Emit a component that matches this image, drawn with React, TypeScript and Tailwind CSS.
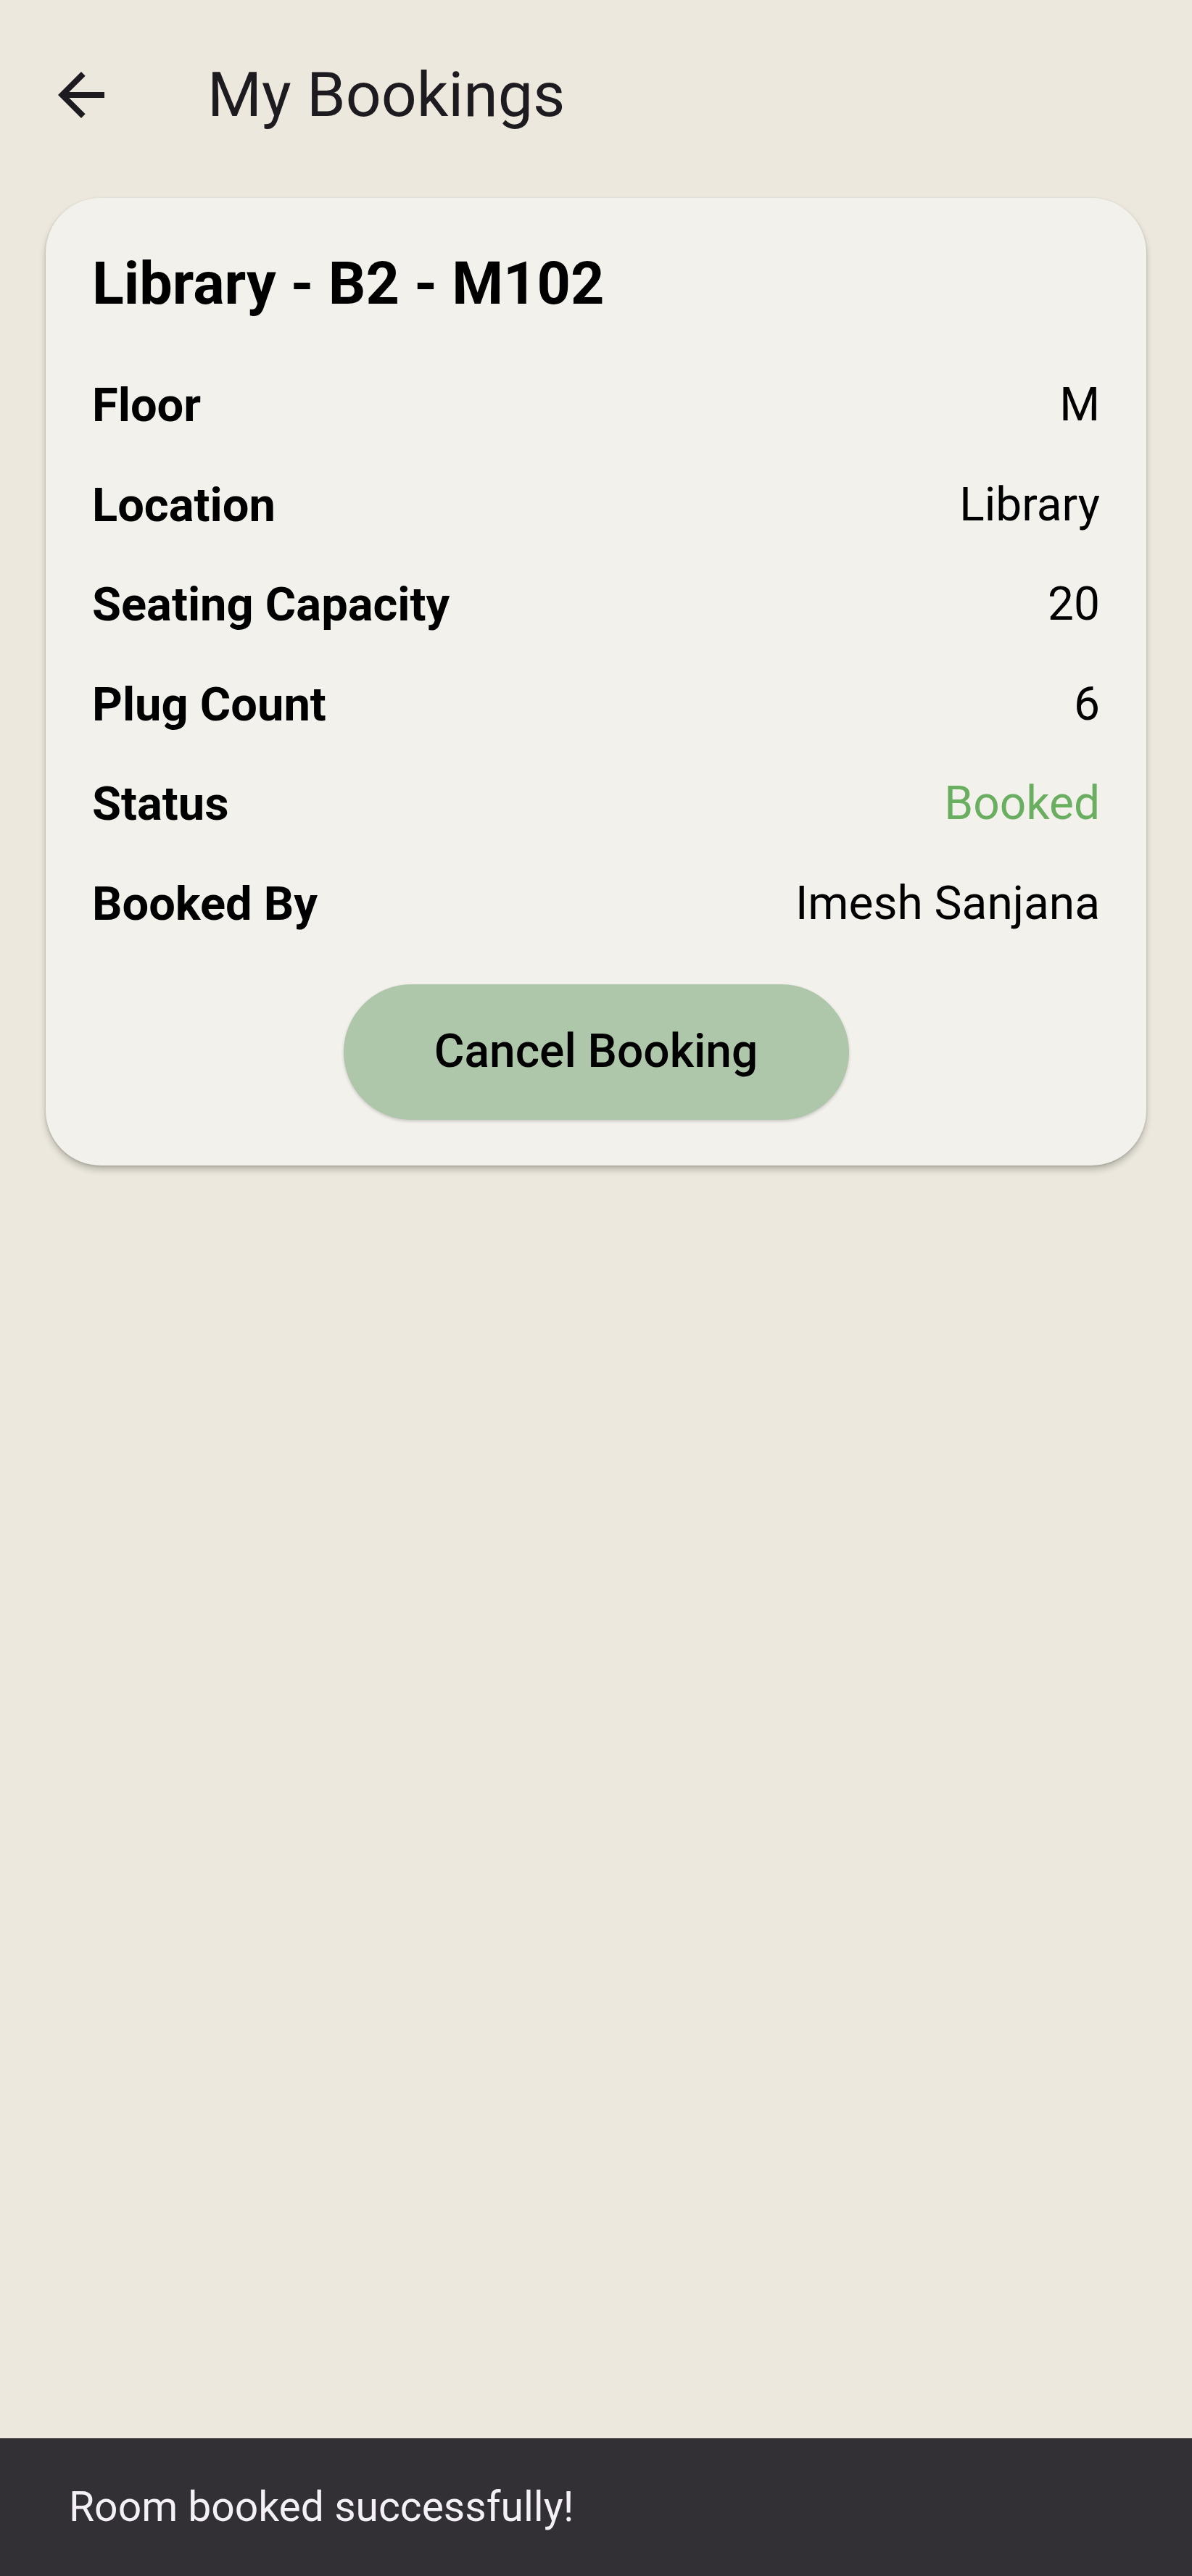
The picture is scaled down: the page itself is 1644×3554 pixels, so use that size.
import { ReactNode } from "react";

// booking details shown on the card
const details: { label: string; value: string; accent?: boolean }[] = [
  { label: "Floor", value: "M" },
  { label: "Location", value: "Library" },
  { label: "Seating Capacity", value: "20" },
  { label: "Plug Count", value: "6" },
  { label: "Status", value: "Booked", accent: true },
  { label: "Booked By", value: "Imesh Sanjana" },
];

const BackArrow = () => (
  <svg viewBox="0 0 24 24" className="w-[96px] h-[96px] text-[#1d1b20]" fill="currentColor">
    <path d="M20 11H7.83l5.59-5.59L12 4l-8 8 8 8 1.41-1.41L7.83 13H20v-2z" />
  </svg>
);

const Row = ({ label, children }: { label: string; children: ReactNode }) => (
  <div className="flex items-center justify-between h-[96px] text-[64px] leading-[96px]">
    <span className="font-bold text-black text-[65px]">{label}</span>
    {children}
  </div>
);

const App = () => {
  return (
    <div className="h-[3554px] flex flex-col bg-[#ece8dd] font-['Roboto',sans-serif] overflow-hidden">
      {/* Top app bar */}
      <header className="h-[256px] flex items-center shrink-0 pt-[6px]">
        <button className="ml-[64px]" aria-label="Back">
          <BackArrow />
        </button>
        <h1 className="ml-[126px] text-[86px] leading-none text-[#1d1b20] font-normal">My Bookings</h1>
      </header>

      {/* Booking card */}
      <div className="mx-[63px] mt-[17px] rounded-[76px] bg-[#f3f1ec] pl-[64px] pr-[64px] pt-[71px] pb-[63px] shadow-[0_6px_10px_rgba(0,0,0,0.22),0_1px_3px_rgba(0,0,0,0.15)]">
        <h2 className="text-[81px] leading-[96px] font-bold text-black">Library - B2 - M102</h2>

        <div className="mt-[71px] flex flex-col gap-[41.6px]">
          {details.map((d) => (
            <Row key={d.label} label={d.label}>
              <span className={d.accent ? "text-[#6aae62]" : "text-black"}>{d.value}</span>
            </Row>
          ))}
        </div>

        <div className="mt-[63px] flex justify-center">
          <button className="w-[697px] h-[187px] rounded-full bg-[#aec6a9] text-[64px] font-medium text-black shadow-[0_2px_4px_rgba(0,0,0,0.18)]">
            Cancel Booking
          </button>
        </div>
      </div>

      {/* Snackbar */}
      <div className="mt-auto h-[190px] shrink-0 bg-[#322f35] flex items-center pl-[95px]">
        <span className="text-[57px] text-[#f5eff7]">Room booked successfully!</span>
      </div>
    </div>
  );
};

export default App;
